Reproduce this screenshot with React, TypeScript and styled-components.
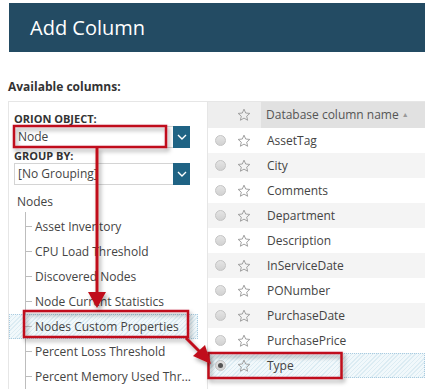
import React from "react";
import styled, { createGlobalStyle } from "styled-components";

const GlobalStyle = createGlobalStyle`
  body {
    margin: 0;
    font-family: "Open Sans", "Liberation Sans", sans-serif;
    color: #444;
    background: #fff;
  }
`;

const columns = [
  "AssetTag",
  "City",
  "Comments",
  "Department",
  "Description",
  "InServiceDate",
  "PONumber",
  "PurchaseDate",
  "PurchasePrice",
  "Type",
];

const treeItems = [
  "Asset Inventory",
  "CPU Load Threshold",
  "Discovered Nodes",
  "Node Current Statistics",
  "Nodes Custom Properties",
  "Percent Loss Threshold",
  "Percent Memory Used Thr...",
];

const hatch = `repeating-linear-gradient(
  135deg,
  #dcecf3 0px,
  #dcecf3 1px,
  #f1f8fb 1px,
  #f1f8fb 3px
)`;

function Star() {
  return (
    <svg width="14" height="14" viewBox="0 0 24 24">
      <polygon
        points="12,2 14.9,8.6 22,9.3 16.6,14 18.2,21 12,17.3 5.8,21 7.4,14 2,9.3 9.1,8.6"
        fill="none"
        stroke="#9a9a9a"
        strokeWidth="1.6"
        strokeLinejoin="round"
      />
    </svg>
  );
}

function Chevron() {
  return (
    <svg width="10" height="6" viewBox="0 0 10 6">
      <polyline points="1,1 5,5 9,1" fill="none" stroke="#fff" strokeWidth="1.4" />
    </svg>
  );
}

function Annotations() {
  return (
    <Overlay width="425" height="389" viewBox="0 0 425 389">
      <defs>
        <filter id="sh" x="-20%" y="-20%" width="140%" height="160%">
          <feDropShadow dx="2" dy="3" stdDeviation="2" floodColor="#000" floodOpacity="0.35" />
        </filter>
      </defs>
      <g filter="url(#sh)" stroke="#c0101a" fill="none" strokeWidth="2.5">
        <rect x="14" y="126" width="152" height="21" />
        <rect x="24" y="311" width="164" height="26" />
        <rect x="208.5" y="353" width="133" height="25" />
        <line x1="97" y1="148" x2="97" y2="294" strokeWidth="3" />
        <line x1="186" y1="338" x2="200" y2="352" strokeWidth="3" />
      </g>
      <g filter="url(#sh)" fill="#c0101a">
        <polygon points="88,292 106,292 97,308" />
        <polygon points="193,356 205,345 211,364" />
      </g>
    </Overlay>
  );
}

export default function App() {
  return (
    <Page>
      <GlobalStyle />
      <Header>
        <Title>Add Column</Title>
      </Header>
      <SectionLabel>Available columns:</SectionLabel>
      <Panels>
        <LeftPanel>
          <FieldLabel>ORION OBJECT:</FieldLabel>
          <Select>
            <SelectText>Node</SelectText>
            <SelectButton>
              <Chevron />
            </SelectButton>
          </Select>
          <FieldLabel>GROUP BY:</FieldLabel>
          <Select>
            <SelectText>[No Grouping]</SelectText>
            <SelectButton>
              <Chevron />
            </SelectButton>
          </Select>
          <Tree>
            <TreeRoot>Nodes</TreeRoot>
            <TreeChildren>
              {treeItems.map((item) => (
                <TreeItem key={item} $selected={item === "Nodes Custom Properties"}>
                  <TreeTick />
                  {item}
                </TreeItem>
              ))}
            </TreeChildren>
          </Tree>
        </LeftPanel>
        <RightPanel>
          <HeadRow>
            <HeadIcons>
              <StarCell>
                <Star />
              </StarCell>
            </HeadIcons>
            <HeadName>
              Database column name <SortArrow>▲</SortArrow>
            </HeadName>
          </HeadRow>
          {columns.map((name, i) => (
            <Row key={name} $alt={i % 2 === 1} $selected={name === "Type"}>
              <RadioCell>
                <Radio $checked={name === "Type"} />
              </RadioCell>
              <StarCell>
                <Star />
              </StarCell>
              <NameCell>{name}</NameCell>
            </Row>
          ))}
        </RightPanel>
      </Panels>
      <Annotations />
    </Page>
  );
}

const Page = styled.div`
  position: relative;
  width: 425px;
  height: 389px;
  overflow: hidden;
  padding-top: 3px;
  box-sizing: border-box;
`;

const Header = styled.div`
  margin-left: 9px;
  height: 49px;
  background: #234b63;
  display: flex;
  align-items: center;
  padding-left: 21px;
`;

const Title = styled.h1`
  margin: 0;
  font-weight: 400;
  font-size: 20px;
  color: #fff;
`;

const SectionLabel = styled.div`
  margin: 27px 0 0 8px;
  height: 15px;
  font-size: 12px;
  font-weight: 700;
  color: #333;
  line-height: 15px;
`;

const Panels = styled.div`
  display: flex;
  margin: 7px 0 0 8px;
  border-top: 1px solid #e6e6e6;
`;

const LeftPanel = styled.div`
  width: 200px;
  border-left: 1px solid #e6e6e6;
  border-right: 1px solid #e6e6e6;
  padding-top: 10px;
  box-sizing: border-box;
`;

const FieldLabel = styled.div`
  margin-left: 5px;
  font-size: 11px;
  font-weight: 700;
  color: #333;
  line-height: 14px;
  height: 14px;
  & + div {
    margin-bottom: 1px;
  }
`;

const Select = styled.div`
  display: flex;
  margin-left: 5px;
  width: 176px;
  height: 22px;
`;

const SelectText = styled.div`
  flex: 1;
  border: 1px solid #d4d4d4;
  border-right: none;
  font-size: 12px;
  color: #444;
  line-height: 20px;
  padding-left: 3px;
  white-space: nowrap;
  overflow: hidden;
`;

const SelectButton = styled.div`
  width: 17px;
  background: #1f6384;
  display: flex;
  align-items: center;
  justify-content: center;
`;

const Tree = styled.div`
  margin-top: 4px;
`;

const TreeRoot = styled.div`
  height: 25px;
  line-height: 25px;
  font-size: 12px;
  padding-left: 8px;
`;

const TreeChildren = styled.div`
  position: relative;
  &::before {
    content: "";
    position: absolute;
    left: 16px;
    top: -2px;
    bottom: 0;
    border-left: 1px solid #bdbdbd;
  }
`;

const TreeItem = styled.div<{ $selected?: boolean }>`
  position: relative;
  height: 25px;
  line-height: 25px;
  font-size: 12px;
  padding-left: 26px;
  margin-right: 9px;
  white-space: nowrap;
  box-sizing: border-box;
  background: ${(p) => (p.$selected ? hatch : "transparent")};
  outline: ${(p) => (p.$selected ? "1px dotted #a9cbe0" : "none")};
  outline-offset: -1px;
`;

const TreeTick = styled.span`
  position: absolute;
  left: 16px;
  top: 12px;
  width: 7px;
  border-top: 1px solid #bdbdbd;
`;

const RightPanel = styled.div`
  flex: 1;
`;

const HeadRow = styled.div`
  display: flex;
  height: 26px;
`;

const HeadIcons = styled.div`
  width: 53px;
  background: #eeeeee;
  display: flex;
  justify-content: flex-end;
  align-items: center;
  padding-right: 7px;
  box-sizing: border-box;
`;

const HeadName = styled.div`
  flex: 1;
  background: #e1e1e1;
  font-size: 12px;
  color: #555;
  line-height: 26px;
  padding-left: 5px;
  white-space: nowrap;
`;

const SortArrow = styled.span`
  font-size: 7px;
  color: #999;
  vertical-align: 2px;
`;

const Row = styled.div<{ $alt?: boolean; $selected?: boolean }>`
  display: flex;
  align-items: center;
  height: 25px;
  background: ${(p) => (p.$selected ? hatch : p.$alt ? "#f4f4f4" : "#fff")};
  outline: ${(p) => (p.$selected ? "1px dotted #a9cbe0" : "none")};
  outline-offset: -1px;
`;

const RadioCell = styled.div`
  width: 25px;
  display: flex;
  justify-content: center;
`;

const Radio = styled.span<{ $checked?: boolean }>`
  position: relative;
  width: 11px;
  height: 11px;
  border-radius: 50%;
  border: 1px solid #c4c4c4;
  background: linear-gradient(#e4e4e4, #d2d2d2);
  box-sizing: border-box;
  &::after {
    content: "";
    display: ${(p) => (p.$checked ? "block" : "none")};
    position: absolute;
    left: 2px;
    top: 2px;
    width: 5px;
    height: 5px;
    border-radius: 50%;
    background: #555;
  }
`;

const StarCell = styled.div`
  width: 21px;
  display: flex;
  justify-content: center;
  align-items: center;
`;

const NameCell = styled.div`
  padding-left: 13px;
  font-size: 12px;
  color: #444;
`;

const Overlay = styled.svg`
  position: absolute;
  left: 0;
  top: 0;
  pointer-events: none;
`;
